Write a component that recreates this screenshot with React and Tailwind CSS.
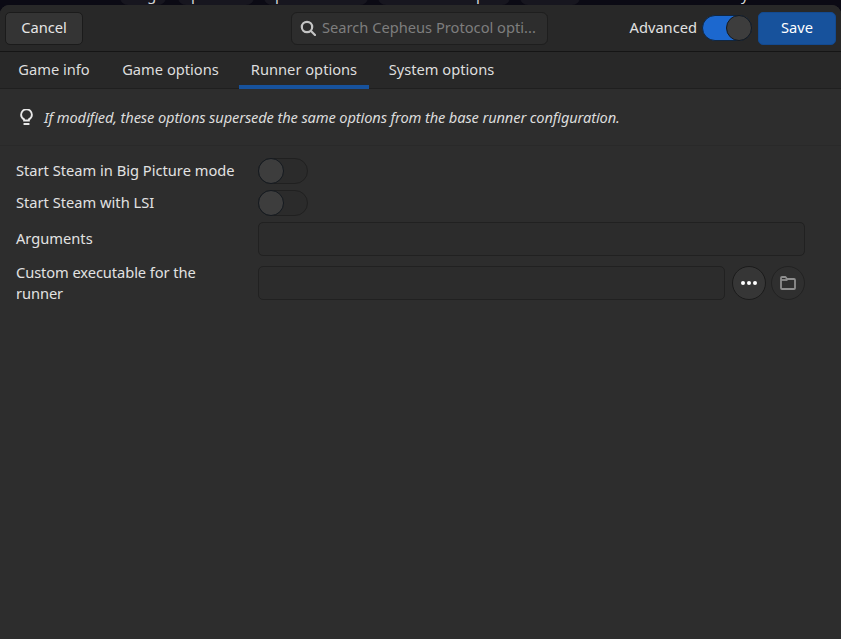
import React from "react";

const Toggle = ({ on }) => (
  <div
    className={`flex h-[26px] w-[50px] shrink-0 items-center rounded-full border ${
      on ? "justify-end border-[#0f2744] bg-[#1c68cf]" : "justify-start border-[#202020] bg-[#2b2b2b]"
    }`}
  >
    <div className="-m-px h-[26px] w-[26px] rounded-full border border-[#14191f] bg-[#3d3d3d]" />
  </div>
);

const Tab = ({ label, active, className }) => (
  <div
    className={`-mb-px flex h-[37px] items-center justify-center border-b-[4px] pt-[1px] ${className} ${
      active ? "border-[#17529c]" : "border-transparent"
    }`}
  >
    {label}
  </div>
);

const Field = ({ className }) => (
  <div className={`h-[34px] shrink-0 rounded-[5px] border border-[#212121] bg-[#2c2c2c] ${className}`} />
);

const Clip = ({ text, className }) => (
  <span className={`absolute top-[-14px] text-[15px] leading-[17px] text-[#d8d8d8] ${className}`}>{text}</span>
);

const App = () => {
  return (
    <div className="relative flex h-[639px] w-[841px] flex-col overflow-hidden bg-[#0b0a14] font-['Noto_Sans',sans-serif] text-[14.67px] text-[#e2e2e2]">
      {/* what is left of the window behind the dialog */}
      <div className="relative h-[5px] shrink-0 overflow-hidden">
        <Clip text="Version" className="left-[4px]" />
        <div className="absolute left-[120px] top-[-10px] h-[15px] w-[46px] rounded-b-lg bg-[#17161f]" />
        <div className="absolute left-[178px] top-[-10px] h-[15px] w-[76px] rounded-b-lg bg-[#17161f]" />
        <div className="absolute left-[264px] top-[-10px] h-[15px] w-[104px] rounded-b-lg bg-[#17161f]" />
        <div className="absolute left-[378px] top-[-10px] h-[15px] w-[132px] rounded-b-lg bg-[#17161f]" />
        <div className="absolute left-[520px] top-[-10px] h-[15px] w-[60px] rounded-b-lg bg-[#17161f]" />
        <Clip text="g" className="left-[147px]" />
        <Clip text="p" className="left-[191px]" />
        <Clip text="p" className="left-[275px]" />
        <Clip text="p" className="left-[476px]" />
        <Clip text="y" className="left-[741px]" />
      </div>

      <div className="flex flex-1 flex-col overflow-hidden rounded-t-[9px] bg-[#2d2d2d]">
        {/* header bar */}
        <div className="flex h-[47px] shrink-0 items-center border-b border-[#151515] bg-[#282828] px-[5px]">
          <button className="h-[33px] w-[78px] shrink-0 rounded-[5px] border border-[#1b1b1b] bg-[#343434] pb-[2px] text-[#e6e6e6]">
            Cancel
          </button>
          <div className="ml-[208px] flex h-[33px] w-[257px] shrink-0 items-center rounded-[6px] border border-[#1e1e1e] bg-[#2d2d2d] pl-[8px]">
            <svg width="16" height="16" viewBox="0 0 16 16" fill="none" stroke="#c4c4c4" strokeWidth="2.2">
              <circle cx="7" cy="7" r="5.2" />
              <path d="M11 11l4 4" strokeLinecap="round" />
            </svg>
            <span className="ml-[6px] pb-[2px] text-[#7e7e7e]">Search Cepheus Protocol opti...</span>
          </div>
          <span className="ml-auto pb-[2px]">Advanced</span>
          <div className="ml-[5px]">
            <Toggle on />
          </div>
          <button className="ml-[6px] h-[33px] w-[78px] shrink-0 rounded-[5px] border border-[#134a90] bg-[#17529c] pb-[2px] text-white">
            Save
          </button>
        </div>

        {/* tabs */}
        <div className="flex h-[37px] shrink-0 gap-2 border-b border-[#1f1f1f] bg-[#282828] pl-[6px] text-[#dedede]">
          <Tab label="Game info" className="w-[96px]" />
          <Tab label="Game options" className="w-[121px]" />
          <Tab label="Runner options" className="w-[130px]" active />
          <Tab label="System options" className="w-[129px]" />
        </div>

        {/* hint */}
        <div className="flex h-[57px] shrink-0 items-center border-b border-[#292929] pl-[20px]">
          <svg width="13" height="17" viewBox="0 0 14 18" fill="none" stroke="#e8e8e8" strokeWidth="2">
            <path d="M4.4 12.2V11c-1.6-.9-3.2-2.4-3.2-5a5.8 5.8 0 0 1 11.6 0c0 2.6-1.6 4.1-3.2 5v1.2z" />
            <path d="M4.6 16h4.8" strokeLinecap="round" />
          </svg>
          <span className="ml-[11px] italic tracking-[-0.135px] text-[#dcdcdc]">
            If modified, these options supersede the same options from the base runner configuration.
          </span>
        </div>

        {/* options */}
        <div className="flex flex-col pl-[16px] pt-[12px]">
          <div className="flex h-[26px] items-center">
            <span className="w-[242px] pb-[2px]">Start Steam in Big Picture mode</span>
            <Toggle />
          </div>
          <div className="mt-[6px] flex h-[26px] items-center">
            <span className="w-[242px] pb-[2px]">Start Steam with LSI</span>
            <Toggle />
          </div>
          <div className="mt-[6px] flex items-center">
            <span className="w-[242px] pb-[2px]">Arguments</span>
            <Field className="w-[547px]" />
          </div>
          <div className="mt-[10px] flex h-[34px] items-center">
            <span className="w-[242px] pr-[20px] leading-[21px] tracking-[-0.08px]">Custom executable for the runner</span>
            <Field className="w-[467px]" />
            <button className="ml-[7px] flex h-[34px] w-[34px] shrink-0 items-center justify-center gap-[2px] rounded-full border border-[#1b1b1b] bg-[#363636] pr-[1px]">
              <span className="h-[4px] w-[4px] rounded-full bg-white" />
              <span className="h-[4px] w-[4px] rounded-full bg-white" />
              <span className="h-[4px] w-[4px] rounded-full bg-white" />
            </button>
            <button className="ml-[5px] flex h-[34px] w-[34px] shrink-0 items-center justify-center rounded-full border border-[#222222] bg-[#2f2f2f]">
              <svg width="16" height="14" viewBox="0 0 16 14" fill="none" stroke="#8e8e8e" strokeWidth="1.8">
                <path d="M1 3V2a1 1 0 0 1 1-1h3.5l1.5 2h7a1 1 0 0 1 1 1v8a1 1 0 0 1-1 1H2a1 1 0 0 1-1-1z" strokeLinejoin="round" />
                <path d="M1 4h6.5" />
              </svg>
            </button>
          </div>
        </div>
      </div>
    </div>
  );
};

export default App;
